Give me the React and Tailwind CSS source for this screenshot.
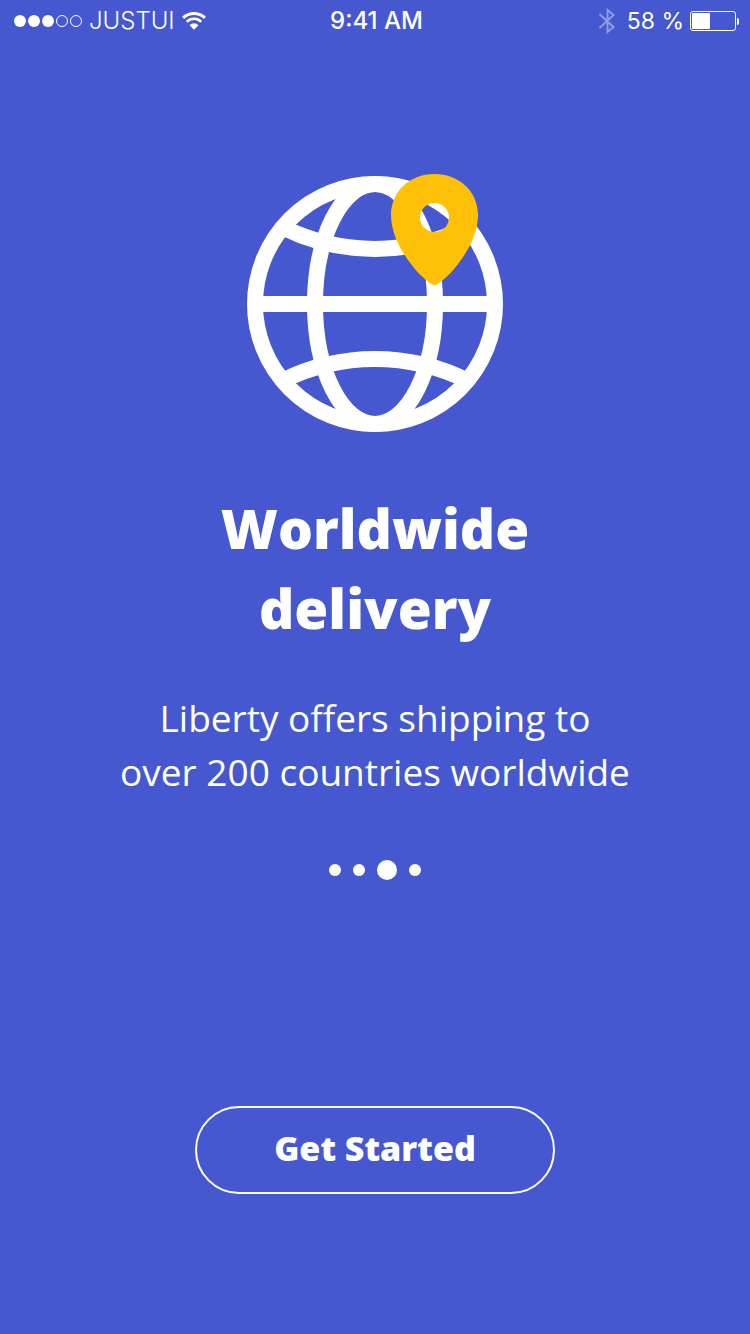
function SignalDots() {
  return (
    <span className="flex gap-[2px]" role="img" aria-label="Signal: 3 of 5">
      <span className="size-3 rounded-full bg-white" />
      <span className="size-3 rounded-full bg-white" />
      <span className="size-3 rounded-full bg-white" />
      <span className="size-3 rounded-full border border-white" />
      <span className="size-3 rounded-full border border-white" />
    </span>
  );
}

function WifiIcon() {
  return (
    <svg className="h-[18px] w-6" viewBox="0 0 24 18" fill="none" stroke="#fff" aria-hidden="true">
      <path d="M1.1 5.9a15.6 15.6 0 0 1 21.8 0" strokeWidth="3" />
      <path d="M4.7 9.7a10.4 10.4 0 0 1 14.6 0" strokeWidth="2.6" />
      <path d="M7.6 13.2a6.2 6.2 0 0 1 8.8 0L12 17.8z" fill="#fff" stroke="none" />
    </svg>
  );
}

function BluetoothIcon() {
  return (
    <svg className="h-[26px] w-4" viewBox="0 0 16 26" fill="none" stroke="#fff" strokeWidth="2" opacity="0.4" aria-hidden="true">
      <path d="M0.5 6L14.5 19L8.5 24V2L14.5 7L0.5 20" />
    </svg>
  );
}

function Battery() {
  return (
    <span className="flex items-center gap-px" role="img" aria-label="Battery">
      <span className="flex h-5 w-[46px] rounded-[3px] border border-white p-px">
        <span className="w-[18px] rounded-[1px] bg-white" />
      </span>
      <span className="h-[7px] w-[2px] rounded-r-full bg-white" />
    </span>
  );
}

function StatusBar() {
  return (
    <header className="grid h-[42px] grid-cols-[1fr_auto_1fr] items-center pr-[11px] pl-[14px] font-['Inter',sans-serif] text-2xl">
      <div className="flex items-center gap-[7px]">
        <SignalDots />
        <span className="font-light">JUSTUI</span>
        <WifiIcon />
      </div>
      <time className="font-medium">9:41 AM</time>
      <div className="flex items-center justify-end gap-[6px]">
        <BluetoothIcon />
        <span className="pl-[6px] text-[23px]">58 %</span>
        <Battery />
      </div>
    </header>
  );
}

function GlobeIcon() {
  return (
    <svg className="h-[258px] w-64" viewBox="247 174 256 258" fill="none" aria-hidden="true">
      <g stroke="#fff" strokeWidth="16">
        <circle cx="375" cy="304" r="120" />
        <ellipse cx="375" cy="304" rx="60" ry="120" />
        <path d="M255 304H495" />
        <path d="M283 227.5A208 208 0 0 0 467 227.5" />
        <path d="M283 380.5A208 208 0 0 1 467 380.5" />
      </g>
      <path
        fill="#ffc107"
        fillRule="evenodd"
        d="M434.5 174C460 174 478 192 478 215C478 245 450 277 437 284.3Q434.5 286 432 284.3C419 277 391 245 391 215C391 192 409 174 434.5 174ZM434.5 203a14.5 14.5 0 1 0 0 29a14.5 14.5 0 1 0 0-29Z"
      />
    </svg>
  );
}

const slides = [false, false, true, false];

export default function App() {
  return (
    <div className="flex min-h-screen flex-col bg-[#4558d0] text-white">
      <StatusBar />
      <main className="flex flex-1 flex-col items-center px-6 pt-[132px] pb-[140px] text-center">
        <GlobeIcon />
        <h1 className="mt-[56px] font-['Open_Sans',sans-serif] text-[55px] leading-[80px] font-extrabold">
          Worldwide
          <br />
          delivery
        </h1>
        <p className="mt-[43px] font-['Open_Sans',sans-serif] text-[37px] leading-[54px]">
          Liberty offers shipping to
          <br />
          over 200 countries worldwide
        </p>
        <nav className="mt-[61px] flex items-center gap-3" aria-label="Slides">
          {slides.map((active, i) => (
            <button
              key={i}
              type="button"
              aria-label={`Slide ${i + 1}`}
              aria-current={active}
              className={active ? "size-5 rounded-full bg-white" : "size-3 rounded-full bg-white"}
            />
          ))}
        </nav>
        <button
          type="button"
          className="mt-auto h-[88px] w-[360px] max-w-full rounded-full border-2 border-white pb-1 font-['Open_Sans',sans-serif] text-[34px] font-extrabold"
        >
          Get Started
        </button>
      </main>
    </div>
  );
}
